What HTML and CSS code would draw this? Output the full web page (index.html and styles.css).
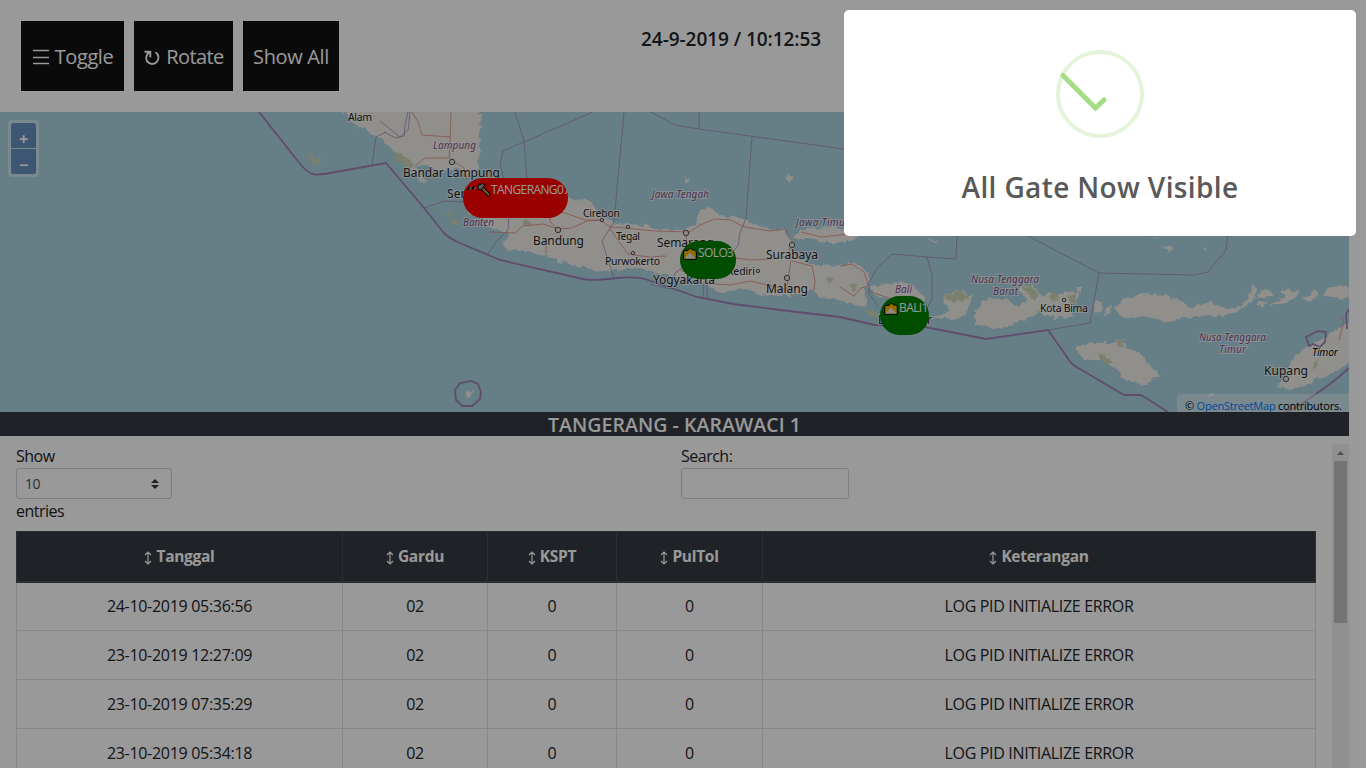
FILE: index.html
```html
<!DOCTYPE html>
<html lang="id">
<head>
<meta charset="utf-8">
<title>Gate Monitor</title>
<link rel="stylesheet" href="styles.css">
</head>
<body>
<div class="page">
  <header class="topbar">
    <div class="buttons">
      <button class="btn btn-toggle"><svg class="btn-icon" viewBox="0 0 18 18"><path d="M1 2.5h16M1 9.500h16M1 15.500h16"/></svg><span>Toggle</span></button>
      <button class="btn btn-rotate"><svg class="btn-icon" viewBox="0 0 18 18"><path d="M1.500 3.800h5.800v5.700M6.800 4.200C3.200 6 2.200 10 4.200 13.400c2.400 3.400 7.400 3.300 9.800.3 2.500-3.200 1.700-7.500-1.700-9.500" stroke-width="1.900"/></svg><span>Rotate</span></button>
      <button class="btn btn-all"><span>Show All</span></button>
    </div>
    <div class="clock">24-9-2019 / 10:12:53</div>
  </header>

  <section class="map">
    <svg class="map-canvas" viewBox="0 112 1349 300">
      <defs>
        <filter id="coast" x="-2%" y="-2%" width="104%" height="104%" color-interpolation-filters="sRGB"><feTurbulence type="fractalNoise" baseFrequency=".16" numOctaves="2" seed="4" result="n"/><feDisplacementMap in="SourceGraphic" in2="n" scale="7" xChannelSelector="R" yChannelSelector="G"/></filter>
      </defs>
      <g class="land" filter="url(#coast)">
        <path d="M341 110L350 120 360 128 378 136 392 150 400 162 410 168 417 180 428 184 421 174 416 166 430 166 440 173 455 167 464 172 472 179 478 170 480 150 479 135 482 110z"/>
        <path d="M467 195L500 192 560 194 575 201 583 199 591 202 600 214 612 222 625 224 645 225 660 229 685 230 696 225 699 212 707 207 715 209 720 216 738 217 750 223 760 225 775 230 785 228 789 240 791 250 800 258 815 265 830 266 845 265 853 262 867 270 870 280 866 290 867 305 860 307 840 300 820 298 812 290 800 293 780 296 757 294 745 289 720 292 700 282 690 278 660 274 640 268 600 271 560 262 540 254 505 249 503 243 510 236 505 232 490 228 478 217 468 215z"/>
        <path d="M792 239L801 229 830 228 860 229 880 232 855 238 842 243 825 243 808 239z"/>
        <path d="M868 286L885 284 900 282 915 287 926 298 922 308 912 315 905 318 900 306 885 297 872 294z"/>
        <path d="M943 298L957 290 973 296 967 312 955 320 945 318 932 318 950 311z"/>
        <path d="M975 312L985 300 1005 298 1019 307 1028 299 1020 292 1020 285 1034 286 1042 298 1048 292 1058 296 1068 292 1078 293 1078 302 1065 307 1075 316 1055 319 1039 312 1015 324 1000 329 975 325z"/>
        <path d="M1095 301L1103 303 1101 312 1094 313zM1106 306L1112 305 1110 315 1105 315zM1077 287h5v5h-5z"/>
        <path d="M1113 310L1122 299 1143 293 1165 295 1180 300 1190 308 1210 301 1225 309 1240 307 1248 298 1252 285 1257 288 1255 298 1246 307 1235 313 1215 316 1200 317 1180 318 1168 322 1145 316 1125 318z"/>
        <path d="M1259 293L1270 290 1275 294 1260 299zM1256 304L1268 299 1262 307zM1269 304L1282 299 1300 289 1296 298 1280 304zM1302 299L1315 290 1319 292 1310 303zM1322 296L1332 286 1348 287 1350 299zM1280 292l8-5 6 5-8 5z"/>
        <path d="M1074 348L1090 343 1115 343 1121 339 1128 347 1142 356 1150 365 1160 375 1150 382 1141 385 1125 380 1118 371 1103 360 1085 360z"/>
        <path d="M1276 386L1285 378 1290 361 1300 352 1320 340 1352 321V361L1335 371 1315 381 1300 387 1287 389z"/>
        <path d="M784 177l5-3 3 4-4 3zM930 239l7 2-3 2zM1152 238l5-1 1 2zM1160 246l13 3-3 2zM1202 249l4-2v5zM1205 396l8-3v4zM685 178l3 3-1 3zM465 393l8-3-4 8z"/>
      </g>
      <g class="forest" filter="url(#coast)">
        <path d="M391 149L402 155 414 164 409 169 397 160zM307 158l4-4 10 6-1 5-4-1zM446 215l5-4-1 6zM450 218l8 2 1 6-6-2zM943 299l15-9 13 7-8 5zM866 310l8 1 3 5-8-1zM1020 287l11-1 7 8-3 6zM1048 296l7-4 5 6-8 4zM1067 296l7-2 3 8-6 1zM1115 344l7-5 3 8zM1098 355l12 3 3 6-10-2zM1312 363l7-4-4 10zM850 283l8 3-6 4zM522 220l7 0 2 5-7 1zM827 278l8 2-6 3z"/>
      </g>
      <g class="roads">
        <path d="M412 112L418 122 422 135 450 137M451 112L450 145 449 158 456 163 464 168 467 180M415 166L425 158 448 158"/>
        <path d="M550 211L565 213 585 220 600 220 610 227 625 228 655 231 690 232 700 225 715 219 730 220 745 227 770 231 785 229 791 241M550 212v9l7 8 15-1 15-7 15-1M490 232l25 1 8-7 20-2 15 5M546 254v-10M610 229l10 14 8 11 20 3 18-1M686 233l1 17 9 12M736 258l15 2 20-1 16-3 5-14M791 260l-4 27 6 10M792 261l20 5 3 15-1 10M680 270l35 14 16 1 19-4 35 8 15-2M840 266l12-2 12 8 4 12M840 287l14 9 7-8 7-2M870 292l16 5 16 5M801 232l20 5 28-3M1339 340l5-18-3-5"/>
      </g>
      <g class="borders">
        <path class="sea" d="M259 112L301 165Q309 174 315 174.500T341 171L386 163 424 208 443 232Q450 239 460 243L500 260 583 279Q592 281 613 278.500T645 279L697 297 733 304 780 310 840 317 875 325 925 327 986 339 1048 330 1067 357Q1071 365 1080 369L1124 395H1141L1168 412M1349 368L1334 381 1316 394 1300 405 1286 412M455 390l5-7 11-2 7 3 3 8-1 7-8 7-10 0-6-6zM1349 309l-3 5 1 15M1306 337l12-6 8 1-1 10-5 5-7-3-4 2z"/>
        <path d="M515 112L524 141 527 180M593 112L503 151 500 164 504 180M624 112L614 222 602 241 609 263 614 279M651 112L675 125 699 129 844 149M699 112v16M752 137L746 218 740 233 738 246 725 260M424 208l20-7 20 1M410 112l-2 18 -8 7-20-16M482 112l-4 2M372 165l4-28 10-5M384 132l12 6 8-2 1-11 3-13M488 254l9-13 11-11 1-14 18-12M868 284l10-17 14-13 36 3 28 2 1-24M927 257l5 18v25l-8 13M1028 236l71 37-9 50-42 7M1099 273l95 2 14-3 18-22 2-16M869 284v10l9 12M704 282l-1 16M707 282v16M650 284l20 5 5-16 15-11"/>
      </g>
      <g class="towns"><circle cx="452" cy="162" r="2.700"/><circle cx="558" cy="230" r="2.700"/><circle cx="602" cy="220" r="1.700"/><circle cx="628" cy="227" r="1.700"/><circle cx="633" cy="253" r="1.700"/><circle cx="686" cy="233" r="2.700"/><circle cx="758" cy="271" r="1.700"/><circle cx="792" cy="245" r="2.700"/><circle cx="787" cy="278" r="2.700"/><circle cx="1064" cy="300" r="1.700"/><circle cx="1286" cy="379" r="2.700"/></g>
      <g class="city">
        <text x="403" y="177" textLength="97">Bandar Lampung</text><text x="447" y="198" textLength="40">Serang</text><text x="533" y="245" textLength="51">Bandung</text><text x="657" y="247" textLength="57">Semarang</text><text x="653" y="284" textLength="62">Yogyakarta</text><text x="766" y="259" textLength="52">Surabaya</text><text x="766" y="293" textLength="42">Malang</text><text x="878" y="324" textLength="54">Denpasar</text><text x="1264" y="375" textLength="44">Kupang</text>
      </g>
      <g class="town-label">
        <text x="348" y="121" textLength="24">Alam</text><text x="583" y="217" textLength="37">Cirebon</text><text x="616" y="240" textLength="24">Tegal</text><text x="605" y="265" textLength="55">Purwokerto</text><text x="727" y="275" textLength="28">Kediri</text><text x="1040" y="312" textLength="48">Kota Bima</text><text class="slant" x="1312" y="356" textLength="26">Timor</text>
      </g>
      <g class="province">
        <text x="433" y="149" textLength="43">Lampung</text><text x="463" y="226" textLength="31">Banten</text><text x="652" y="198" textLength="57">Jawa Tengah</text><text x="796" y="226" textLength="53">Jawa Timur</text><text x="895" y="293" textLength="17">Bali</text><text x="971" y="283" textLength="68">Nusa Tenggara</text><text x="993" y="295" textLength="25">Barat</text><text x="1199" y="341" textLength="67">Nusa Tenggara</text><text x="1219" y="353" textLength="27">Timur</text>
      </g>
    </svg>
    <div class="zoom"><button>+</button><button>−</button></div>
    <div class="marker marker-down"><svg class="hammer" viewBox="0 0 26 16"><path d="M5 5l-2 3M9.500 4.500l-2 3" stroke="#000" stroke-width="2.500"/><path d="M6 5l-1.500 3M10.500 5l-1.500 2.500" stroke="#ccc"/><path d="M16 5l8.500 8.500" stroke="#000" stroke-width="4"/><path d="M16 5l8 8" stroke="#d99a20" stroke-width="2"/><path d="M12.500 6.500l1-3.500 4.500-1.500 2 1.500-4 5z" fill="#999" stroke="#000"/></svg><span>TANGERANG07</span></div>
    <div class="marker marker-solo"><svg class="gate" viewBox="0 0 14 13"><path d="M.7 12.300V4.500L3 3l1 1 3.500-3 2.500 2.500 1-1 2.300 2v7.800z" fill="#f7b500" stroke="#000"/><path d="M1.500 11.500L7 5.500l5.500 6z" fill="#e8e5dc"/></svg><span>SOLO3</span></div>
    <div class="marker marker-bali"><svg class="gate" viewBox="0 0 14 13"><path d="M.7 12.300V4.500L3 3l1 1 3.500-3 2.500 2.500 1-1 2.300 2v7.800z" fill="#f7b500" stroke="#000"/><path d="M1.500 11.500L7 5.500l5.500 6z" fill="#e8e5dc"/></svg><span>BALI1</span></div>
    <div class="credit">© <a>OpenStreetMap</a> contributors.</div>
  </section>

  <h1 class="gate-title"><span>TANGERANG - KARAWACI 1</span></h1>

  <section class="log">
    <div class="log-body">
      <div class="controls">
        <div class="control"><span>Show</span><div class="field select"><span>10</span><svg viewBox="0 0 8 10"><path d="M0 4L4 0l4 4zM0 6l4 4 4-4z"/></svg></div><span>entries</span></div>
        <div class="control"><span>Search:</span><div class="field search"></div></div>
      </div>
      <table>
        <colgroup><col class="c1"><col class="c2"><col class="c3"><col class="c4"><col class="c5"></colgroup>
        <thead><tr>
          <th><svg class="sort" viewBox="0 0 8 14"><path d="M4 1v12M1 4l3-3 3 3M1 10l3 3 3-3"/></svg>Tanggal</th>
          <th><svg class="sort" viewBox="0 0 8 14"><path d="M4 1v12M1 4l3-3 3 3M1 10l3 3 3-3"/></svg>Gardu</th>
          <th><svg class="sort" viewBox="0 0 8 14"><path d="M4 1v12M1 4l3-3 3 3M1 10l3 3 3-3"/></svg>KSPT</th>
          <th><svg class="sort" viewBox="0 0 8 14"><path d="M4 1v12M1 4l3-3 3 3M1 10l3 3 3-3"/></svg>PulTol</th>
          <th><svg class="sort" viewBox="0 0 8 14"><path d="M4 1v12M1 4l3-3 3 3M1 10l3 3 3-3"/></svg>Keterangan</th>
        </tr></thead>
        <tbody>
          <tr><td>24-10-2019 05:36:56</td><td>02</td><td>0</td><td>0</td><td class="msg">LOG PID INITIALIZE ERROR</td></tr>
          <tr><td>23-10-2019 12:27:09</td><td>02</td><td>0</td><td>0</td><td class="msg">LOG PID INITIALIZE ERROR</td></tr>
          <tr><td>23-10-2019 07:35:29</td><td>02</td><td>0</td><td>0</td><td class="msg">LOG PID INITIALIZE ERROR</td></tr>
          <tr><td>23-10-2019 05:34:18</td><td>02</td><td>0</td><td>0</td><td class="msg">LOG PID INITIALIZE ERROR</td></tr>
        </tbody>
      </table>
    </div>
    <div class="scrollbar"><svg viewBox="0 0 17 17"><path d="M5 11l3.500-4 3.500 4z"/></svg><div class="thumb"></div></div>
  </section>
</div>

<div class="overlay"></div>
<div class="toast">
  <svg class="check" viewBox="0 0 88 88"><circle cx="44" cy="44" r="42"/><path d="M7 25.500L39.500 58 48 50"/></svg>
  <h2>All Gate Now Visible</h2>
</div>
</body>
</html>
```

FILE: styles.css
```css
* { box-sizing: border-box; }
html, body { height: 100%; margin: 0; overflow: hidden; }
body { background: #fff; color: #212529; font: 16px/24px "Open Sans", "Noto Sans", sans-serif; }
button { font-family: inherit; border: 0; padding: 0; }
.page { width: 1349px; height: 768px; display: flex; flex-direction: column; }

.topbar { height: 112px; flex: none; display: grid; grid-template-columns: 641px 1fr; }
.buttons { display: flex; gap: 10px; padding: 21px 0 0 21px; }
.btn { height: 70px; display: flex; align-items: center; justify-content: center; gap: 5px; background: #111; color: #fff; font-size: 20px; padding-top: 1px; }
.btn-toggle { width: 103px; letter-spacing: -.4px; }
.btn-rotate { width: 99px; letter-spacing: -.6px; }
.btn-all { width: 96px; letter-spacing: -.35px; }
.btn-icon { width: 18px; height: 18px; fill: none; stroke: #fff; stroke-width: 1.3; }
.clock { padding-top: 27px; font-size: 19px; font-weight: 600; letter-spacing: -.05px; white-space: nowrap; }

.map { position: relative; height: 300px; flex: none; background: #aad3df; overflow: hidden; }
.map-canvas { display: block; width: 1349px; height: 300px; }
.land { fill: #f2efe9; }
.forest { fill: #cbd6b4; }
.roads { fill: none; stroke: #e0938b; stroke-width: .9; }
.borders { fill: none; stroke: #a081b5; stroke-width: 1; }
.borders path { opacity: .75; }
.borders .sea { stroke-width: 1.8; opacity: 1; }
.towns { fill: #e6e1dc; stroke: #555; stroke-width: 1; }
.map text { font-family: "Noto Sans", sans-serif; paint-order: stroke; stroke: rgba(255,255,255,.65); stroke-width: 2px; }
.city text { font-size: 12px; fill: #222; }
.town-label text { font-size: 10.500px; fill: #222; }
.province text { font-size: 10px; font-style: italic; fill: #7d5386; }
.map .slant { font-style: italic; fill: #000; }

.zoom { position: absolute; left: 8px; top: 8px; width: 31px; height: 57px; padding: 3px; border-radius: 4px; background: rgba(255,255,255,.4); display: flex; flex-direction: column; gap: 1px; }
.zoom button { height: 25px; background: #6690bf; color: #fff; font-size: 16px; font-weight: 700; line-height: 25px; padding-top: 4px; overflow: hidden; }
.zoom button:first-child { border-radius: 2px 2px 0 0; }
.zoom button:last-child { border-radius: 0 0 2px 2px; }
.marker { position: absolute; display: flex; align-items: flex-start; overflow: hidden; color: #fff; font-size: 12px; line-height: 18px; white-space: nowrap; }
.marker svg { flex: none; fill: none; }
.marker-down { left: 463px; top: 66px; width: 105px; height: 40px; border-radius: 20px; background: #f00; padding: 3px 0 0 2px; letter-spacing: -.6px; }
.marker-solo { left: 680px; top: 129px; width: 56px; height: 38px; border-radius: 19px; background: green; padding: 3px 0 0 3px; letter-spacing: -.6px; }
.marker-bali { left: 880px; top: 184px; width: 49px; height: 39px; border-radius: 20px; background: green; padding: 3px 0 0 4px; letter-spacing: -.6px; }
.hammer { width: 26px; height: 16px; margin-top: 1px; }
.gate { width: 14px; height: 13px; margin: 3px 1px 0 0; }
.credit { position: absolute; right: 0; bottom: 0; width: 172px; height: 18px; padding: 2px 8px 0; border-radius: 4px 0 0 0; background: rgba(255,255,255,.4); color: #000; font-size: 11px; line-height: 19px; letter-spacing: -.22px; white-space: nowrap; }
.credit a { color: #007bff; }

.gate-title { height: 24px; flex: none; margin: 0; background: #343a40; color: #fff; text-align: center; font-size: 19.500px; line-height: 26px; font-weight: 600; letter-spacing: .05px; }
.log { flex: 1; min-height: 0; margin-top: 8px; display: flex; overflow: hidden; }
.log-body { flex: 1; padding-left: 16px; }
.controls { display: grid; grid-template-columns: 665px 1fr; height: 87px; }
.control { display: flex; flex-direction: column; align-items: flex-start; letter-spacing: -.5px; }
.control > span { line-height: 25px; height: 24px; }
.field { height: 31px; border: 1px solid #ced4da; border-radius: 3px; }
.select { width: 156px; display: flex; justify-content: space-between; align-items: center; padding: 0 12px 0 8px; font-size: 14px; color: #495057; }
.select svg { width: 8px; height: 10px; fill: #343a40; }
.search { width: 168px; }
table { width: 1300px; table-layout: fixed; border-collapse: collapse; text-align: center; }
.c1 { width: 326px; } .c2 { width: 145px; } .c3 { width: 129px; } .c4 { width: 146px; }
th { height: 50px; padding: 0; background: #343a40; color: #fff; border: 1px solid #454d55; border-bottom-width: 2px; font-weight: 700; font-size: 15.500px; letter-spacing: -.3px; }
td { height: 49px; padding: 0; border: 1px solid #dee2e6; letter-spacing: -.3px; }
.msg { letter-spacing: -.33px; }
.sort { width: 8px; height: 14px; margin-right: 4px; vertical-align: -3px; fill: none; stroke: #fff; stroke-width: 1.2; }
.scrollbar { width: 17px; background: #f1f1f1; display: flex; flex-direction: column; align-items: center; }
.scrollbar svg { width: 17px; height: 17px; fill: #888; flex: none; }
.thumb { width: 13px; height: 162px; background: #c1c1c1; }

.overlay { position: fixed; inset: 0; background: rgba(0,0,0,.4); }
.toast { position: fixed; left: 844px; top: 10px; width: 512px; height: 226px; border-radius: 5px; background: #fff; display: flex; flex-direction: column; align-items: center; padding-top: 40px; }
.check { width: 88px; height: 88px; fill: none; }
.check circle { stroke: #e4f4da; stroke-width: 4; }
.check path { stroke: #a5dc86; stroke-width: 5; stroke-linecap: round; }
.toast h2 { margin: 29px 0 0; color: #595959; font-size: 28px; line-height: 40px; font-weight: 600; letter-spacing: .36px; white-space: nowrap; }
```
